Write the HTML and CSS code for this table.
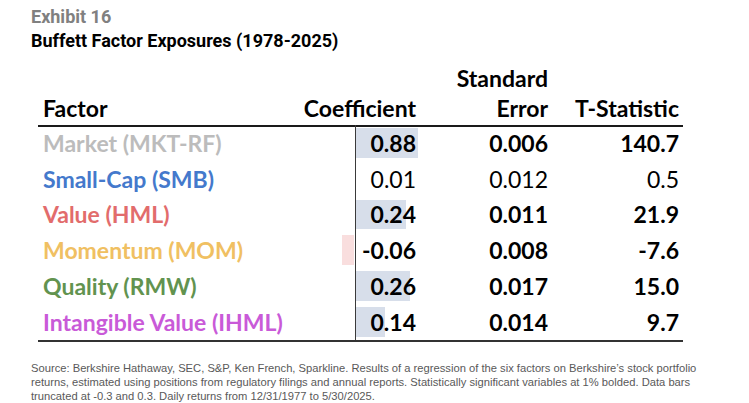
FILE: index.html
```html
<!DOCTYPE html>
<html>
<head>
<meta charset="utf-8">
<link rel="stylesheet" href="styles.css">
</head>
<body>
<div class="page">
  <div class="titles">
    <div class="exhibit">Exhibit 16</div>
    <div class="title">Buffett Factor Exposures (1978-2025)</div>
  </div>
  <div class="table">
    <div class="th th-factor">Factor</div>
    <div class="th num">Coefficient</div>
    <div class="th num">Standard<br>Error</div>
    <div class="th num last">T-Statistic</div>

    <div class="td factor c-mkt">Market (MKT-RF)</div>
    <div class="td num coef b"><span class="bar pos" style="width:62px"></span><span class="val">0.88</span></div>
    <div class="td num b">0.006</div>
    <div class="td num last b">140.7</div>

    <div class="td factor c-smb">Small-Cap (SMB)</div>
    <div class="td num coef"><span class="val">0.01</span></div>
    <div class="td num">0.012</div>
    <div class="td num last">0.5</div>

    <div class="td factor c-hml">Value (HML)</div>
    <div class="td num coef b"><span class="bar pos" style="width:50px"></span><span class="val">0.24</span></div>
    <div class="td num b">0.011</div>
    <div class="td num last b">21.9</div>

    <div class="td factor c-mom">Momentum (MOM)</div>
    <div class="td num coef b"><span class="bar neg" style="width:12px"></span><span class="val">-0.06</span></div>
    <div class="td num b">0.008</div>
    <div class="td num last b">-7.6</div>

    <div class="td factor c-rmw">Quality (RMW)</div>
    <div class="td num coef b"><span class="bar pos" style="width:54px"></span><span class="val">0.26</span></div>
    <div class="td num b">0.017</div>
    <div class="td num last b">15.0</div>

    <div class="td factor c-ihml">Intangible Value (IHML)</div>
    <div class="td num coef b"><span class="bar pos" style="width:29px"></span><span class="val">0.14</span></div>
    <div class="td num b">0.014</div>
    <div class="td num last b">9.7</div>
  </div>
  <p class="source">Source: Berkshire Hathaway, SEC, S&amp;P, Ken French, Sparkline. Results of a regression of the six factors on Berkshire’s stock portfolio returns, estimated using positions from regulatory filings and annual reports. Statistically significant variables at 1% bolded. Data bars truncated at -0.3 and 0.3. Daily returns from 12/31/1977 to 5/30/2025.</p>
</div>
</body>
</html>
```

FILE: styles.css
```css
html, body {
  margin: 0;
  padding: 0;
  background: #ffffff;
}

.page {
  width: 749px;
  height: 403px;
  padding: 5px 0 0 31px;
  box-sizing: border-box;
}

.titles {
  font-family: Roboto, "Liberation Sans", sans-serif;
  font-weight: 700;
  font-size: 18px;
  line-height: 24px;
}

.exhibit {
  color: #808080;
}

.title {
  color: #000000;
}

.table {
  margin: 12px 0 0 7px;
  width: 645px;
  display: grid;
  grid-template-columns: 262px 122px 132px 129px;
  grid-template-rows: 60px repeat(6, 35.8px);
  font-family: Lato, "Open Sans", sans-serif;
  font-size: 23px;
  color: #000000;
  border-bottom: 2px solid #333333;
}

.th {
  font-weight: 700;
  line-height: 30px;
  align-self: end;
  padding-bottom: 2px;
  border-bottom: 2px solid #1a1a1a;
  margin-bottom: -2px;
  white-space: nowrap;
}

.th-factor {
  padding-left: 5px;
}

.num {
  text-align: right;
  padding-right: 6px;
}

.num.last {
  padding-right: 4px;
}

.td {
  display: flex;
  align-items: center;
  line-height: 30px;
}

.td.num {
  justify-content: flex-end;
}

.td.b {
  font-weight: 700;
}

.factor {
  padding-left: 5px;
  font-weight: 700;
  white-space: nowrap;
}

.coef {
  position: relative;
}

.coef::before {
  content: "";
  position: absolute;
  left: 55px;
  top: 0;
  bottom: 0;
  width: 1px;
  background: #3a3a3a;
}

.bar {
  position: absolute;
  top: 3px;
  bottom: 3px;
}

.bar.pos {
  left: 56px;
  background: #d7deea;
}

.bar.neg {
  right: 68px;
  background: #f9dede;
}

.val {
  position: relative;
}

.c-mkt { color: #bcbcbc; }
.c-smb { color: #4479cc; }
.c-hml { color: #e26c6c; }
.c-mom { color: #f0c062; }
.c-rmw { color: #62934f; }
.c-ihml { color: #c95ad8; }

.source {
  margin: 19px 0 0 0;
  width: 680px;
  font-family: "Liberation Sans", Arial, sans-serif;
  font-size: 11.2px;
  line-height: 14px;
  color: #595959;
}
```
